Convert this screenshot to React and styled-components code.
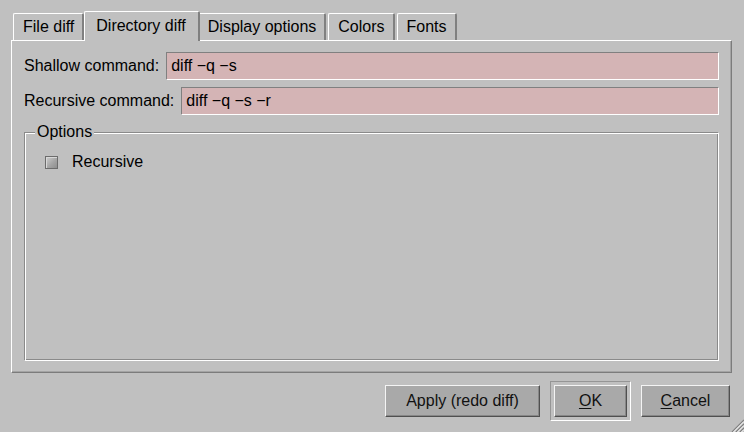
import React from 'react'
import styled, { createGlobalStyle } from 'styled-components'

const Global = createGlobalStyle`
  html, body {
    margin: 0;
    padding: 0;
    background: #c0c0c0;
  }
  body {
    font-family: "Liberation Sans", Arial, sans-serif;
    font-size: 16px;
    color: #000;
  }
`

let Window = styled.div`
  position: relative;
  box-sizing: border-box;
  width: 744px;
  height: 432px;
  padding: 11px 12px 0 11px;
  display: flex;
  flex-direction: column;
`

let TabBar = styled.div`
  display: flex;
  align-items: flex-end;
  height: 29px;
  padding-left: 2px;
  position: relative;
  z-index: 2;
`

let Tab = styled.div`
  box-sizing: border-box;
  display: flex;
  align-items: center;
  height: ${p => (p.$active ? '30px' : '27px')};
  margin: ${p => (p.$active ? '0 0 -1px -2px' : '0 2px 0 0')};
  margin-right: ${p => (p.$active ? '-2px' : '2px')};
  padding: ${p => (p.$active ? '0 12px 2px 11px' : '0 8px 0 9px')};
  background: #c0c0c0;
  border-top: 1px solid #fff;
  border-left: 1px solid #fff;
  border-right: 2px solid #808080;
  border-radius: 2px 2px 0 0;
  white-space: nowrap;
  position: relative;
  z-index: ${p => (p.$active ? 3 : 1)};
`

let Panel = styled.div`
  box-sizing: border-box;
  height: 333px;
  border-top: 1px solid #fff;
  border-left: 1px solid #fff;
  border-right: 1px solid #7c7c7c;
  border-bottom: 1px solid #7c7c7c;
  box-shadow: inset -1px -1px 0 #a4a4a4;
  padding: 11px 12px 11px 12px;
  display: flex;
  flex-direction: column;
  gap: 7px;
`

let Row = styled.div`
  display: flex;
  align-items: center;
  gap: 7px;
`

let Label = styled.span`
  white-space: nowrap;
`

let Field = styled.div`
  flex: 1;
  box-sizing: border-box;
  height: 28px;
  display: flex;
  align-items: center;
  padding-left: 4px;
  background: #d4b4b5;
  border-top: 1px solid #808080;
  border-left: 1px solid #808080;
  border-right: 1px solid #fff;
  border-bottom: 1px solid #fff;
  white-space: nowrap;
`

let Group = styled.div`
  position: relative;
  flex: 1;
  margin-top: 10px;
  box-sizing: border-box;
  border-top: 1px solid #8a8a8a;
  border-left: 1px solid #8a8a8a;
  border-right: 1px solid #fff;
  border-bottom: 1px solid #fff;
  box-shadow: inset 1px 1px 0 #fff, inset -1px -1px 0 #8a8a8a;
  padding: 20px 20px;
`

let GroupTitle = styled.span`
  position: absolute;
  top: -10px;
  left: 10px;
  padding: 0 2px;
  line-height: 18px;
  background: #c0c0c0;
`

let CheckRow = styled.label`
  display: flex;
  align-items: center;
  gap: 14px;
`

let CheckBox = styled.span`
  box-sizing: border-box;
  width: 13px;
  height: 13px;
  border: 1px solid #6c6c6c;
  background: linear-gradient(135deg, #cfcfcf 0%, #a6a6a6 55%, #8e8e8e 100%);
  box-shadow: inset 1px 1px 0 #d8d8d8;
`

let ButtonBar = styled.div`
  display: flex;
  justify-content: flex-end;
  align-items: center;
  gap: 10px;
  margin-top: 8px;
  padding-right: 2px;
`

let DefaultFrame = styled.div`
  padding: 3px;
  border-top: 1px solid #959595;
  border-left: 1px solid #959595;
  border-right: 1px solid #fff;
  border-bottom: 1px solid #fff;
`

let Button = styled.button`
  box-sizing: border-box;
  width: ${p => p.$w}px;
  height: 32px;
  padding: 0;
  font-family: inherit;
  font-size: 16px;
  color: #111;
  background: #a9a9a9;
  border-top: 1px solid #f4f4f4;
  border-left: 1px solid #f4f4f4;
  border-right: 1px solid #505050;
  border-bottom: 1px solid #505050;
  box-shadow: inset -1px -1px 0 #878787;
  cursor: pointer;
`

let Accel = styled.span`
  text-decoration: underline;
  text-underline-offset: 2px;
`

let Grip = styled.svg`
  position: absolute;
  right: 0;
  bottom: 0;
`

export default function App() {
  const tabs = ['File diff', 'Directory diff', 'Display options', 'Colors', 'Fonts']
  return (
    <Window>
      <Global />
      <TabBar>
        {tabs.map(t => (
          <Tab key={t} $active={t === 'Directory diff'}>{t}</Tab>
        ))}
      </TabBar>
      <Panel>
        <Row>
          <Label>Shallow command:</Label>
          <Field>diff −q −s</Field>
        </Row>
        <Row>
          <Label>Recursive command:</Label>
          <Field>diff −q −s −r</Field>
        </Row>
        <Group>
          <GroupTitle>Options</GroupTitle>
          <CheckRow>
            <CheckBox />
            Recursive
          </CheckRow>
        </Group>
      </Panel>
      <ButtonBar>
        <Button $w={155}>Apply (redo diff)</Button>
        <DefaultFrame>
          <Button $w={73}><Accel>O</Accel>K</Button>
        </DefaultFrame>
        <Button $w={89}><Accel>C</Accel>ancel</Button>
      </ButtonBar>
      <Grip width="13" height="13" viewBox="0 0 13 13">
        <path d="M13 1 L1 13 M13 5 L5 13 M13 9 L9 13" stroke="#808080" strokeWidth="1.2" />
        <path d="M13 2.5 L2.5 13 M13 6.5 L6.5 13 M13 10.5 L10.5 13" stroke="#fff" strokeWidth="1" />
      </Grip>
    </Window>
  )
}
